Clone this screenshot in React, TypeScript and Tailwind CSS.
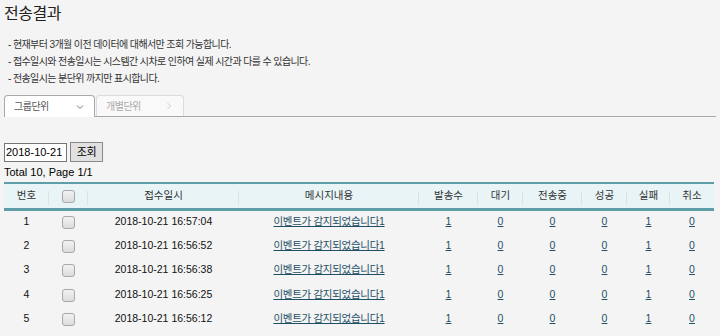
import React from "react"

const rows = [
  { no: 1, time: "2018-10-21 16:57:04" },
  { no: 2, time: "2018-10-21 16:56:52" },
  { no: 3, time: "2018-10-21 16:56:38" },
  { no: 4, time: "2018-10-21 16:56:25" },
  { no: 5, time: "2018-10-21 16:56:12" },
]

const font = "font-['Liberation_Sans','Noto_Sans_CJK_KR',sans-serif]"

function Check() {
  return <span className="inline-block w-[13px] h-[13px] rounded-[3px] border border-[#a8a8a8] bg-gradient-to-b from-[#f2f2f2] to-[#dcdcdc] align-middle" />
}

function HeadCell({ children, w, last }: { children?: React.ReactNode; w: string; last?: boolean }) {
  return (
    <th className={`${w} relative font-normal text-[#333] h-[26px] p-0`}>
      {children}
      {!last && <span className="absolute right-0 top-[7px] h-[14px] w-px bg-[#d6e4e6]" />}
    </th>
  )
}

function Num({ v }: { v: number }) {
  return <a className="underline text-[#1f4f66]">{v}</a>
}

export default function App() {
  return (
    <div className={`min-h-[336px] w-[720px] bg-[#f4f4f4] px-[4px] pt-[3px] text-[#222] ${font}`}>
      <h1 className="text-[16px] leading-[22px] text-[#222] tracking-[-0.5px]">전송결과</h1>

      <ul className="mt-[14px] space-y-[5px] pl-[4px] text-[10px] leading-[12px] tracking-[-0.6px] text-[#333]">
        <li>- 현재부터 3개월 이전 데이터에 대해서만 조회 가능합니다.</li>
        <li>- 접수일시와 전송일시는 시스템간 시차로 인하여 실제 시간과 다를 수 있습니다.</li>
        <li>- 전송일시는 분단위 까지만 표시합니다.</li>
      </ul>

      <div className="mt-[9px] flex items-end border-b border-[#a9a9a9] h-[23px]">
        <div className="-mb-px flex h-[22px] w-[91px] items-center justify-between rounded-t-[4px] border border-b-0 border-[#a9a9a9] bg-white px-[9px] text-[10px] text-[#555] tracking-[-0.5px]">
          <span>그룹단위</span>
          <svg width="8" height="6" viewBox="0 0 8 6" className="mr-[1px]"><path d="M1 1.5 L4 4.5 L7 1.5" fill="none" stroke="#777" strokeWidth="1" /></svg>
        </div>
        <div className="ml-[1px] flex h-[21px] w-[88px] items-center justify-between rounded-t-[4px] border border-b-0 border-[#dcdcdc] bg-[#f9f9f9] px-[9px] text-[10px] text-[#aaa] tracking-[-0.5px]">
          <span>개별단위</span>
          <svg width="6" height="8" viewBox="0 0 6 8" className="mr-[2px]"><path d="M1.5 1 L4.5 4 L1.5 7" fill="none" stroke="#ccc" strokeWidth="1" /></svg>
        </div>
      </div>

      <div className="mt-[25px] flex items-center gap-[3px]">
        <input
          readOnly
          value="2018-10-21"
          className="h-[19px] w-[63px] border border-[#767676] bg-white px-[1px] text-[11px] text-black outline-none"
        />
        <button className="h-[20px] w-[33px] border border-[#888] bg-[#e1e1e1] text-[11px] text-black tracking-[-0.3px]">조회</button>
      </div>

      <div className="mt-[3px] text-[11px] leading-[14px] text-black">Total 10, Page 1/1</div>

      <table className="mt-[3px] w-[710px] table-fixed border-collapse text-[10.5px] text-center">
        <thead>
          <tr className="bg-[#e8f4f6] border-t-2 border-b-[3px] border-[#5e9ea8]">
            <HeadCell w="w-[45px]">번호</HeadCell>
            <HeadCell w="w-[39px]"><Check /></HeadCell>
            <HeadCell w="w-[151px]">접수일시</HeadCell>
            <HeadCell w="w-[180px]">메시지내용</HeadCell>
            <HeadCell w="w-[59px]">발송수</HeadCell>
            <HeadCell w="w-[45px]">대기</HeadCell>
            <HeadCell w="w-[59px]">전송중</HeadCell>
            <HeadCell w="w-[45px]">성공</HeadCell>
            <HeadCell w="w-[43px]">실패</HeadCell>
            <HeadCell w="w-[44px]" last>취소</HeadCell>
          </tr>
        </thead>
        <tbody className="text-[10.5px] text-[#111]">
          {rows.map((r) => (
            <tr key={r.no} className="h-[24.5px]">
              <td>{r.no}</td>
              <td><Check /></td>
              <td>{r.time}</td>
              <td><a className="underline text-[#1f4f66] tracking-[-0.3px]">이벤트가 감지되었습니다1</a></td>
              <td><Num v={1} /></td>
              <td><Num v={0} /></td>
              <td><Num v={0} /></td>
              <td><Num v={0} /></td>
              <td><Num v={1} /></td>
              <td><Num v={0} /></td>
            </tr>
          ))}
        </tbody>
      </table>
    </div>
  )
}
